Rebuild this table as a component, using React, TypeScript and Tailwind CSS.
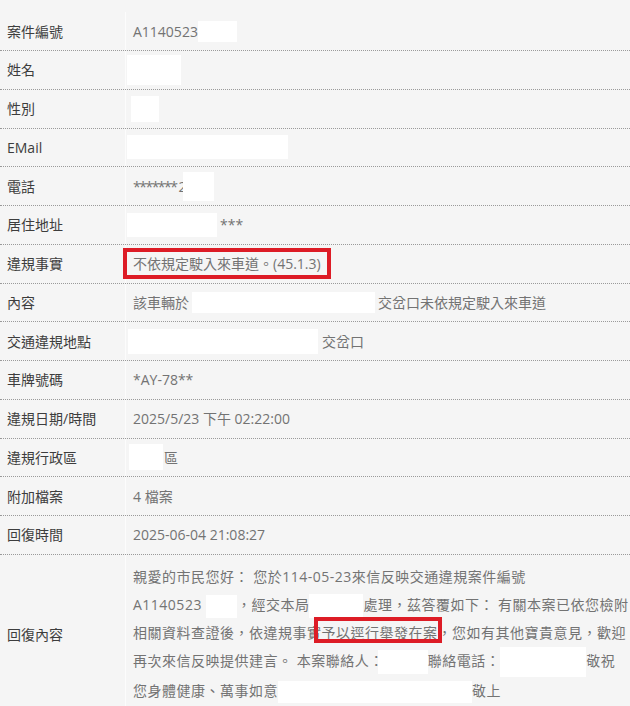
import React from "react";

// white masking block used to hide personal data
const Blank = ({ className = "" }: { className?: string }) => (
  <span className={`inline-block bg-white align-middle ${className}`} />
);

const Row = ({
  label,
  children,
  tall = false,
}: {
  label: string;
  children: React.ReactNode;
  tall?: boolean;
}) => (
  <div
    className={`flex border-b border-dotted border-[#9a9a9a] ${
      tall ? "min-h-[160px]" : "h-[38.75px]"
    }`}
  >
    <div className="w-[125px] shrink-0 flex items-center pl-[7px] text-[14px] text-[#3d3d3d]">
      {label}
    </div>
    <div
      className={`flex-1 border-l border-[#fcfcfc] pl-[7px] text-[14px] text-[#737373] ${
        tall ? "py-[8px]" : "flex items-center whitespace-nowrap"
      }`}
    >
      {children}
    </div>
  </div>
);

export default function App() {
  return (
    <div
      className="min-h-screen w-[630px] bg-[#f5f5f5] pt-[12.25px] overflow-hidden"
      style={{ fontFamily: "'Open Sans', 'Noto Sans CJK TC', sans-serif" }}
    >
      <Row label="案件編號">
        <span>A1140523</span>
        <Blank className="w-[39px] h-[21px]" />
      </Row>
      <Row label="姓名">
        <Blank className="-ml-[6px] w-[54px] h-[30px]" />
      </Row>
      <Row label="性別">
        <Blank className="-ml-[2px] w-[28px] h-[26px]" />
      </Row>
      <Row label="EMail">
        <Blank className="-ml-[6px] w-[161px] h-[24px]" />
      </Row>
      <Row label="電話">
        <span className="tracking-[-1.5px]">*******</span>
        <span className="ml-[2px]">2</span>
        <Blank className="-ml-[4px] w-[31px] h-[29px]" />
      </Row>
      <Row label="居住地址">
        <Blank className="-ml-[6px] w-[90px] h-[24px]" />
        <span className="ml-[3px]">***</span>
      </Row>
      <Row label="違規事實">
        <span className="-ml-[10px] inline-flex items-center h-[31px] w-[208px] border-4 border-[#dd1c26] pl-[6px]">
          不依規定駛入來車道。(45.1.3)
        </span>
      </Row>
      <Row label="內容">
        <span>該車輛於</span>
        <Blank className="ml-[3px] w-[183px] h-[21px]" />
        <span className="ml-[3px]">交岔口未依規定駛入來車道</span>
      </Row>
      <Row label="交通違規地點">
        <Blank className="-ml-[5px] w-[190px] h-[25px]" />
        <span className="ml-[4px]">交岔口</span>
      </Row>
      <Row label="車牌號碼">
        <span>*AY-78**</span>
      </Row>
      <Row label="違規日期/時間">
        <span>2025/5/23 下午 02:22:00</span>
      </Row>
      <Row label="違規行政區">
        <Blank className="-ml-[4px] w-[34px] h-[26px]" />
        <span className="ml-[1px]">區</span>
      </Row>
      <Row label="附加檔案">
        <span>4 檔案</span>
      </Row>
      <Row label="回復時間">
        <span>2025-06-04 21:08:27</span>
      </Row>
      <Row label="回復內容" tall>
        <div className="leading-[28px] tracking-[0.5px] whitespace-nowrap">
          <div>親愛的市民您好： 您於114-05-23來信反映交通違規案件編號</div>
          <div>
            A1140523
            <Blank className="ml-[4px] w-[31px] h-[23px]" />
            ，經交本局
            <Blank className="w-[54px] h-[24px]" />
            處理，茲答覆如下： 有關本案已依您檢附
          </div>
          <div>
            相關資料查證後，依違規事實
            <span className="relative">
              予以逕行舉發在案
              <span className="absolute -left-[8px] -right-[4px] top-1/2 -translate-y-[15px] h-[26px] border-4 border-[#dd1c26]" />
            </span>
            ，您如有其他寶貴意見，歡迎
          </div>
          <div>
            再次來信反映提供建言。 本案聯絡人：
            <Blank className="-ml-[6px] w-[50px] h-[24px]" />
            聯絡電話：
            <Blank className="w-[86px] h-[30px]" />
            敬祝
          </div>
          <div>
            您身體健康、萬事如意
            <Blank className="w-[194px] h-[22px]" />
            敬上
          </div>
        </div>
      </Row>
    </div>
  );
}
